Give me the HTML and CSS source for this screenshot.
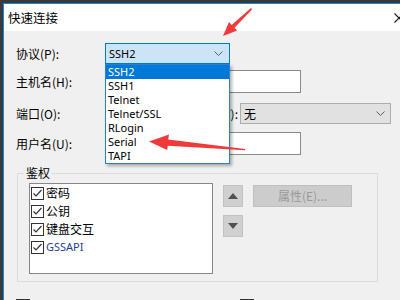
FILE: index.html
```html
<!DOCTYPE html>
<html lang="zh-CN">
<head>
    <meta charset="UTF-8">
    <title>快速连接</title>
    <link rel="stylesheet" href="styles.css">
</head>
<body>
    <div class="window">
        <div class="titlebar">
            <span class="title">快速连接</span>
            <svg class="close" width="10" height="10" viewBox="0 0 10 10"><path d="M0.5 0.5 L9.5 9.5 M9.5 0.5 L0.5 9.5" stroke="#111" stroke-width="1.1" fill="none"/></svg>
        </div>
        <div class="content">
            <div class="row">
                <span class="label">协议(P):</span>
                <div class="combo active">
                    <span class="latin">SSH2</span>
                    <svg class="chev" width="9" height="5" viewBox="0 0 9 5"><path d="M0.5 0.5 L4.5 4.5 L8.5 0.5" stroke="#606060" fill="none"/></svg>
                </div>
            </div>
            <div class="row tall">
                <span class="label">主机名(H):</span>
                <div class="field wide"></div>
            </div>
            <div class="row port-row">
                <span class="label">端口(O):</span>
                <div class="field port">22</div>
                <span class="label-right">防火墙(F):</span>
                <div class="combo plain">
                    <span>无</span>
                    <svg class="chev" width="9" height="5" viewBox="0 0 9 5"><path d="M0.5 0.5 L4.5 4.5 L8.5 0.5" stroke="#606060" fill="none"/></svg>
                </div>
            </div>
            <div class="row tall user-row">
                <span class="label">用户名(U):</span>
                <div class="field wide"></div>
            </div>

            <fieldset class="group">
                <legend>鉴权</legend>
                <div class="group-body">
                    <div class="listbox">
                        <div class="item"><svg class="check" width="13" height="13" viewBox="0 0 13 13"><rect x="0.5" y="0.5" width="12" height="12" fill="#fff" stroke="#333"/><path d="M2.5 6.5 L5 9 L10.5 3" stroke="#333" stroke-width="1.2" fill="none"/></svg>密码</div>
                        <div class="item"><svg class="check" width="13" height="13" viewBox="0 0 13 13"><rect x="0.5" y="0.5" width="12" height="12" fill="#fff" stroke="#333"/><path d="M2.5 6.5 L5 9 L10.5 3" stroke="#333" stroke-width="1.2" fill="none"/></svg>公钥</div>
                        <div class="item"><svg class="check" width="13" height="13" viewBox="0 0 13 13"><rect x="0.5" y="0.5" width="12" height="12" fill="#fff" stroke="#333"/><path d="M2.5 6.5 L5 9 L10.5 3" stroke="#333" stroke-width="1.2" fill="none"/></svg>键盘交互</div>
                        <div class="item selected"><svg class="check" width="13" height="13" viewBox="0 0 13 13"><rect x="0.5" y="0.5" width="12" height="12" fill="#fff" stroke="#333"/><path d="M2.5 6.5 L5 9 L10.5 3" stroke="#333" stroke-width="1.2" fill="none"/></svg><span class="latin">GSSAPI</span></div>
                    </div>
                    <div class="move-btns">
                        <div class="sq-btn"><svg width="10" height="6" viewBox="0 0 10 6"><path d="M0 6 L5 0 L10 6 Z" fill="#505050"/></svg></div>
                        <div class="sq-btn"><svg width="10" height="6" viewBox="0 0 10 6"><path d="M0 0 L5 6 L10 0 Z" fill="#505050"/></svg></div>
                    </div>
                    <div class="btn disabled">属性(E)...</div>
                </div>
            </fieldset>

            <div class="bottom-row">
                <span class="dark-box"></span><span class="faint">启动时显示快速连接(W)</span>
                <span class="dark-box second"></span><span class="faint">保存会话(V)</span>
            </div>
        </div>

        <div class="dropdown">
            <div class="opt hl">SSH2</div>
            <div class="opt">SSH1</div>
            <div class="opt">Telnet</div>
            <div class="opt">Telnet/SSL</div>
            <div class="opt">RLogin</div>
            <div class="opt">Serial</div>
            <div class="opt">TAPI</div>
        </div>
    </div>

    <!-- annotation arrows -->
    <svg class="marks" width="400" height="300" viewBox="0 0 400 300">
        <polygon points="223,36 229,22 231.7,24.9 251,8 252,9.5 234.5,27.7 237.2,30.6" fill="#f03a3a"/>
        <polygon points="149,141.5 169,134.5 168.2,139.6 245,149 245,150.2 167.8,145.8 167.2,150" fill="#f03a3a"/>
    </svg>
</body>
</html>
```

FILE: styles.css
```css
html, body {
    margin: 0;
    overflow: hidden;
}
body {
    background-color: #3a3a3a;
    font-family: "Noto Sans CJK SC", "Liberation Sans", sans-serif;
    font-size: 12px;
    color: #000;
    width: 400px;
    height: 300px;
}
.latin {
    font-family: "Noto Sans", sans-serif;
    font-size: 11px;
}
.window {
    position: relative;
    margin: 3px 0 0 3px;
    border-left: 1px solid #1a86d8;
    border-top: 1px solid #1a86d8;
    background-color: #f0f0f0;
    height: 300px;
}
.titlebar {
    height: 27px;
    background-color: #fff;
    display: flex;
    align-items: center;
    justify-content: space-between;
    padding-left: 4px;
}
.title {
    font-size: 12.5px;
    line-height: 16px;
}
.close {
    margin-right: -4px;
    margin-top: 1px;
}
.content {
    padding: 12px 0 0 12px;
}
.row {
    display: flex;
    align-items: center;
    height: 21px;
    line-height: 16px;
}
.row.tall {
    height: 23px;
    margin-top: 6px;
}
.port-row {
    margin-top: 10px;
}
.row.user-row {
    margin-top: 8px;
}
.label {
    width: 89px;
}
.combo {
    box-sizing: border-box;
    height: 21px;
    display: flex;
    align-items: center;
    justify-content: space-between;
    padding: 0 6px 0 3px;
}
.combo.active {
    width: 125px;
    background-color: #cce4f7;
    border: 1px solid #0078d7;
}
.combo.plain {
    width: 151px;
    margin-left: 2px;
    background-color: #e1e1e1;
    border: 1px solid #adadad;
    padding-right: 5px;
}
.field {
    box-sizing: border-box;
    height: 23px;
    background-color: #fff;
    border: 1px solid #8a8a8a;
    padding: 2px 3px;
}
.field.wide {
    width: 196px;
}
.field.port {
    width: 50px;
    height: 21px;
    padding: 1px 3px;
}
.label-right {
    width: 83px;
    text-align: right;
}
.group {
    box-sizing: border-box;
    width: 361px;
    margin: 10px 0 0 1px;
    padding: 2px 0 7px 11px;
    border: 1px solid #dcdcdc;
}
.group legend {
    padding: 0 2px;
    margin-left: -5px;
    line-height: 16px;
}
.group-body {
    display: flex;
    align-items: flex-start;
}
.listbox {
    box-sizing: border-box;
    width: 184px;
    height: 91px;
    background-color: #fff;
    border: 1px solid #828790;
    padding-left: 1px;
}
.item {
    height: 18px;
    display: flex;
    align-items: center;
    line-height: 16px;
}
.check {
    margin-right: 2px;
    flex-shrink: 0;
}
.item.selected {
    color: #203f92;
}
.move-btns {
    display: flex;
    flex-direction: column;
    gap: 8px;
    margin: 2px 0 0 10px;
}
.sq-btn {
    box-sizing: border-box;
    width: 20px;
    height: 22px;
    background-color: #d0d0d0;
    border: 1px solid #c2c2c2;
    display: flex;
    align-items: center;
    justify-content: center;
}
.btn {
    box-sizing: border-box;
    width: 99px;
    height: 22px;
    margin: 2px 0 0 10px;
    display: flex;
    align-items: center;
    justify-content: center;
    line-height: 16px;
}
.btn.disabled {
    background-color: #cccccc;
    border: 1px solid #bfbfbf;
    color: #9a9a9a;
}
.bottom-row {
    display: flex;
    align-items: center;
    margin-top: 16px;
    line-height: 16px;
}
.dark-box {
    width: 14px;
    height: 14px;
    background-color: #333;
    margin-right: 5px;
}
.dark-box.second {
    margin-left: 78px;
}
.faint {
    color: #c8c8c8;
}
.dropdown {
    position: absolute;
    left: 101px;
    top: 60px;
    width: 125px;
    box-sizing: border-box;
    background-color: #fff;
    border: 1px solid #2a7fd0;
    box-shadow: 2px 2px 3px rgba(0, 0, 0, 0.3);
    font-family: "Noto Sans", sans-serif;
    font-size: 11px;
}
.opt {
    height: 14px;
    line-height: 14px;
    padding-left: 2px;
}
.opt.hl {
    background-color: #0078d7;
    color: #fff;
}
.marks {
    position: absolute;
    left: 0;
    top: 0;
    pointer-events: none;
}
```
